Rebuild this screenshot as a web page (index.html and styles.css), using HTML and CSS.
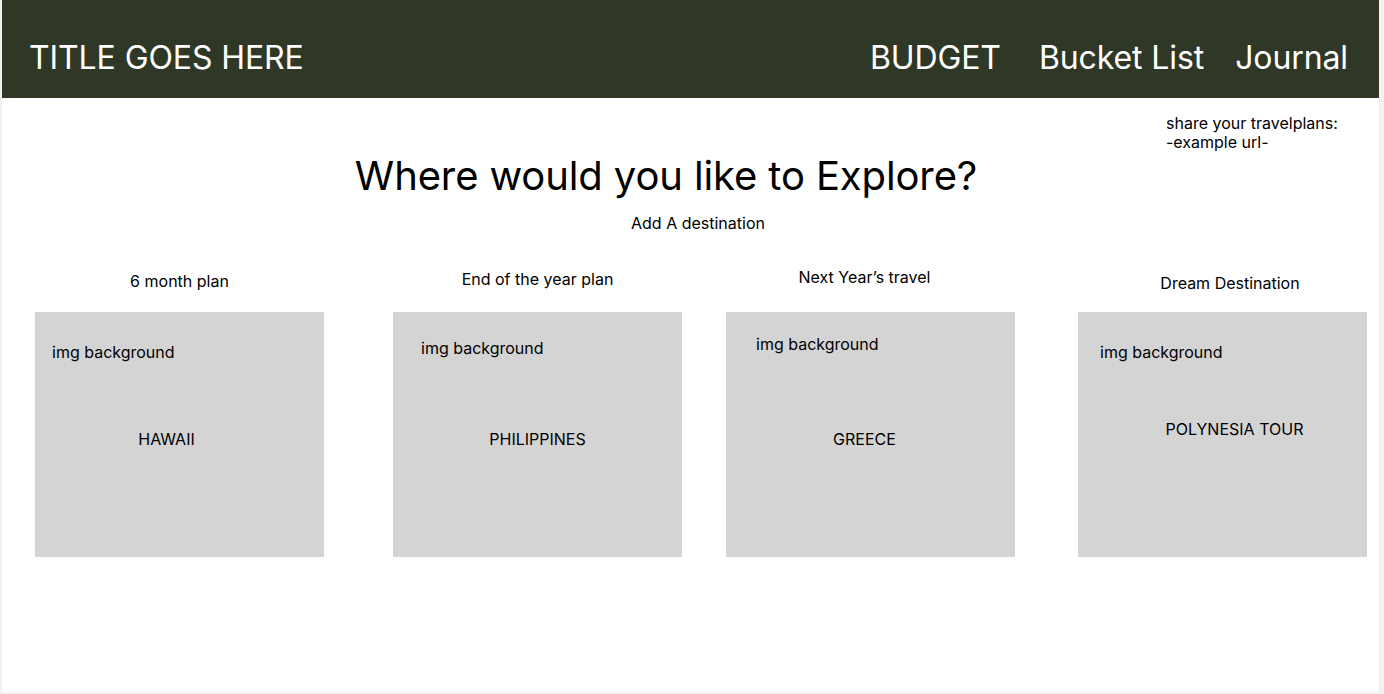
FILE: index.html
```html
<!DOCTYPE html>
<html lang="en">
<head>
<meta charset="utf-8">
<title>Travel planner</title>
<link rel="stylesheet" href="styles.css">
</head>
<body>
<div class="frame">
  <header class="header">
    <div class="title">TITLE GOES HERE</div>
    <nav class="nav">
      <a class="nav-link">BUDGET</a>
      <a class="nav-link nav-bucket">Bucket List</a>
      <a class="nav-link nav-journal">Journal</a>
    </nav>
  </header>
  <div class="share">
    <div>share your travelplans:</div>
    <div>-example url-</div>
  </div>
  <h1 class="heading">Where would you like to Explore?</h1>
  <div class="add">Add A destination</div>
  <div class="cards">
    <div class="card c1">
      <div class="card-head">6 month plan</div>
      <div class="card-box">
        <div class="img-label">img background</div>
        <div class="dest">HAWAII</div>
      </div>
    </div>
    <div class="card c2">
      <div class="card-head">End of the year plan</div>
      <div class="card-box">
        <div class="img-label">img background</div>
        <div class="dest">PHILIPPINES</div>
      </div>
    </div>
    <div class="card c3">
      <div class="card-head">Next Year’s travel</div>
      <div class="card-box">
        <div class="img-label">img background</div>
        <div class="dest">GREECE</div>
      </div>
    </div>
    <div class="card c4">
      <div class="card-head">Dream Destination</div>
      <div class="card-box">
        <div class="img-label">img background</div>
        <div class="dest">POLYNESIA TOUR</div>
      </div>
    </div>
  </div>
</div>
</body>
</html>
```

FILE: styles.css
```css
html, body {
  margin: 0;
  padding: 0;
}
body {
  background: #f1f1f1;
  font-family: Inter, "Noto Sans", sans-serif;
  color: #000;
  height: 694px;
  overflow: hidden;
}
.frame {
  margin-left: 2px;
  width: 1377px;
  height: 692px;
  background: #fff;
}
.header {
  height: 98px;
  box-sizing: border-box;
  background: #2f3826;
  color: #fff;
  display: flex;
  align-items: flex-start;
  padding: 38px 31px 0 27px;
  font-size: 32px;
  line-height: 39px;
  letter-spacing: -0.1px;
}
.title {
  white-space: nowrap;
}
.nav {
  margin-left: auto;
  display: flex;
}
.nav-link {
  color: #fff;
  text-decoration: none;
  white-space: nowrap;
}
.nav-bucket {
  margin-left: 38px;
}
.nav-journal {
  margin-left: 31px;
}
.share {
  margin-top: 16px;
  padding-left: 1164px;
  font-size: 16px;
  line-height: 19px;
}
.heading {
  margin: 4px 0 0;
  font-weight: 400;
  font-size: 40px;
  line-height: 40px;
  letter-spacing: -0.12px;
  text-align: center;
  padding-right: 49px;
}
.add {
  margin-top: 17px;
  font-size: 16px;
  line-height: 20px;
  text-align: center;
  padding-left: 15px;
}
.cards {
  display: flex;
  padding-left: 33px;
  font-size: 16px;
  line-height: 20px;
}
.card {
  width: 289px;
  flex: none;
}
.card-head {
  height: 79px;
  box-sizing: border-box;
  padding-top: 38px;
  text-align: center;
}
.card-box {
  height: 245px;
  box-sizing: border-box;
  background: #d4d4d4;
  padding-top: 30px;
}
.img-label {
  padding-left: 17px;
}
.dest {
  margin-top: 67px;
  text-align: center;
}
.c1 .dest {
  padding-right: 26px;
}
.c2 {
  margin-left: 69px;
}
.c2 .card-head {
  padding-top: 36px;
}
.c2 .card-box {
  padding-top: 26px;
}
.c2 .img-label {
  padding-left: 28px;
}
.c2 .dest {
  margin-top: 71px;
}
.c3 {
  margin-left: 44px;
}
.c3 .card-head {
  padding-top: 34px;
  padding-right: 12px;
}
.c3 .card-box {
  padding-top: 22px;
}
.c3 .img-label {
  padding-left: 30px;
}
.c3 .dest {
  margin-top: 75px;
  padding-right: 12px;
}
.c4 {
  margin-left: 63px;
}
.c4 .card-head {
  padding-top: 40px;
  padding-left: 15px;
}
.c4 .card-box {
  padding-top: 30px;
}
.c4 .img-label {
  padding-left: 22px;
}
.c4 .dest {
  margin-top: 57px;
  padding-left: 24px;
}
```
